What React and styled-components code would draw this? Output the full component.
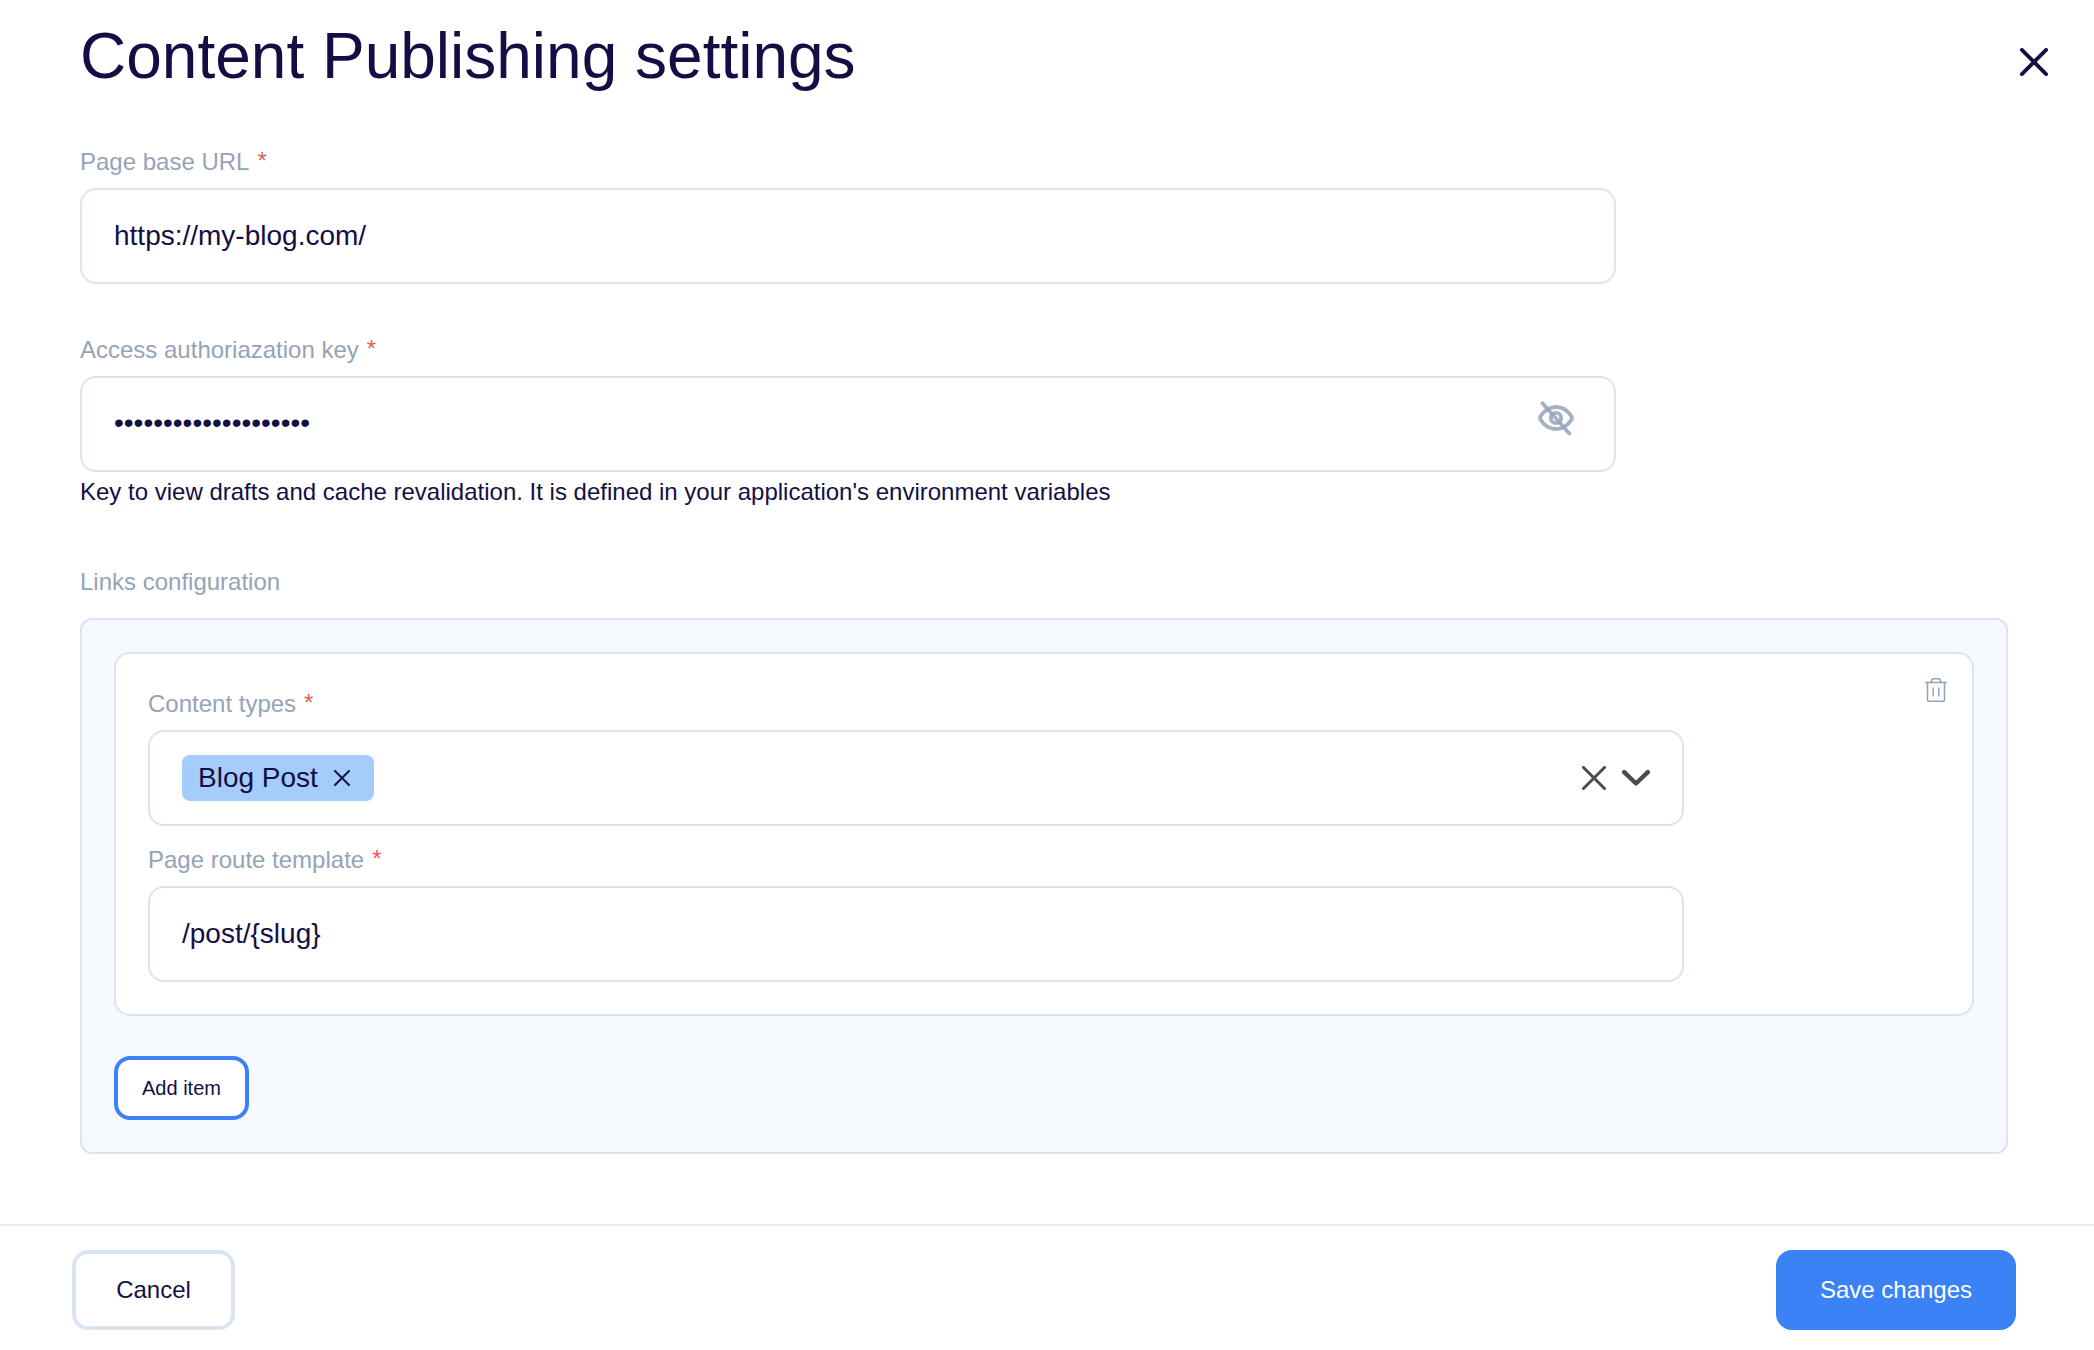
import React from 'react';
import styled, { createGlobalStyle } from 'styled-components';

const ink = '#130f45';
const muted = '#94a3b8';
const line = '#dbe4f3';
const blue = '#3b82f6';

const GlobalStyle = createGlobalStyle`
  *, *::before, *::after { box-sizing: border-box; }
  body {
    margin: 0;
    background: #fff;
    color: ${ink};
    font-family: "Liberation Sans", Arial, Helvetica, sans-serif;
  }
  button { font: inherit; color: inherit; cursor: pointer; }
`;

const Dialog = styled.div`
  width: 100%;
  height: 1350px;
  display: flex;
  flex-direction: column;
  background: #fff;
`;

const Header = styled.header`
  display: flex;
  justify-content: space-between;
  align-items: flex-start;
  height: 148px;
  padding: 20px 46px 0 80px;
`;

const Title = styled.h1`
  margin: 0;
  font-size: 64px;
  font-weight: 400;
  line-height: 73px;
`;

const IconButton = styled.button`
  display: flex;
  padding: 0;
  border: 0;
  background: none;
  color: ${(p) => p.$color || ink};
  margin-top: ${(p) => p.$top || 0}px;
`;

const Body = styled.main`
  flex: 1;
  display: flex;
  flex-direction: column;
  padding: 0 86px 0 80px;
`;

const Field = styled.div`
  display: flex;
  flex-direction: column;
  width: 1536px;
  margin-bottom: ${(p) => p.$gap || 0}px;
`;

const Label = styled.div`
  display: flex;
  gap: 8px;
  margin-bottom: ${(p) => p.$gap || 12}px;
  font-size: 24px;
  line-height: 28px;
  color: ${muted};
`;

const Required = styled.span`
  margin-top: -1px;
  color: #e2605a;
`;

const Box = styled.div`
  display: flex;
  align-items: center;
  justify-content: space-between;
  height: 96px;
  padding: 0 32px;
  border: 2px solid ${line};
  border-radius: 16px;
  background: #fff;
  font-size: 28px;
  line-height: 32px;
`;

const Secret = styled.span`
  margin-bottom: 2px;
`;

const EyeButton = styled(IconButton)`
  margin: 0 8px 12px 0;
`;

const Hint = styled.div`
  margin-top: 6px;
  font-size: 24px;
  line-height: 28px;
`;

const Panel = styled.section`
  display: flex;
  flex-direction: column;
  align-items: flex-start;
  gap: 40px;
  padding: 32px;
  border: 2px solid ${line};
  border-radius: 12px;
  background: #f6f9fe;
`;

const Card = styled.div`
  display: flex;
  justify-content: space-between;
  align-items: flex-start;
  width: 100%;
  padding: 36px 25px 32px 32px;
  border: 2px solid ${line};
  border-radius: 16px;
  background: #fff;
`;

const Tag = styled.span`
  display: flex;
  align-items: center;
  justify-content: space-between;
  width: 192px;
  height: 46px;
  padding: 0 24px 0 16px;
  border-radius: 8px;
  background: #a5cdfb;
`;

const Indicators = styled.div`
  display: flex;
  align-items: center;
  gap: 16px;
  color: #4b4b50;
`;

const Button = styled.button`
  display: flex;
  align-items: center;
  justify-content: center;
  padding: 0;
  width: ${(p) => p.$width}px;
  height: ${(p) => p.$height}px;
  border: 4px solid ${(p) => p.$border};
  border-radius: 16px;
  background: ${(p) => p.$fill || '#fff'};
  color: ${(p) => p.$text || ink};
  && { font-size: ${(p) => p.$size}px; }
`;

const Footer = styled.footer`
  display: flex;
  justify-content: space-between;
  align-items: flex-start;
  height: 126px;
  padding: 24px 78px 0 72px;
  border-top: 2px solid #ecedf4;
`;

const Cross = ({ size, stroke, cap = 'round' }) => {
  const a = stroke / 2;
  const b = size - a;
  return (
    <svg width={size} height={size} viewBox={`0 0 ${size} ${size}`} fill="none" stroke="currentColor" strokeWidth={stroke} strokeLinecap={cap}>
      <path d={`M${a} ${a}L${b} ${b}M${b} ${a}L${a} ${b}`} />
    </svg>
  );
};

const Chevron = () => (
  <svg width="28" height="16" viewBox="0 0 28 16" fill="none" stroke="currentColor" strokeWidth="4.400" strokeLinecap="round" strokeLinejoin="round">
    <path d="M2.200 2.200L14 13.500L25.800 2.200" />
  </svg>
);

const EyeOff = () => (
  <svg width="36" height="36" viewBox="0 0 36 36" fill="none" stroke="currentColor" strokeOpacity="0.85" strokeWidth="3.800" strokeLinecap="round" strokeLinejoin="round">
    <path d="M2.600 16.300C6.500 10.200 11.800 7 18 7S29.500 10.200 33.400 16.300Q34.400 18 33.400 19.700C29.500 25.800 24.200 29 18 29S6.500 25.800 2.600 19.700Q1.600 18 2.600 16.300Z" />
    <circle cx="18" cy="18" r="5.200" />
    <path d="M4.500 3.200L31.300 33.600" />
  </svg>
);

const Trash = () => (
  <svg width="22" height="24" viewBox="0 0 22 24" fill="none" stroke="currentColor" strokeWidth="1.500">
    <path d="M0 4.500H22M2.500 4.500V22.300Q2.500 23.250 3.500 23.250H18.500Q19.500 23.250 19.500 22.300V4.500M6.500 4.500V3Q6.500 0.750 8.800 0.750H13.200Q15.500 0.750 15.500 3V4.500M8.200 9.500V18.500M13.800 9.500V18.500" />
  </svg>
);

export default function App() {
  return (
    <>
      <GlobalStyle />
      <Dialog>
        <Header>
          <Title>Content Publishing settings</Title>
          <IconButton $top={28} aria-label="Close">
            <Cross size={28} stroke={3.8} />
          </IconButton>
        </Header>
        <Body>
          <Field $gap={52}>
            <Label>Page base URL <Required>*</Required></Label>
            <Box>https://my-blog.com/</Box>
          </Field>
          <Field $gap={62}>
            <Label>Access authoriazation key <Required>*</Required></Label>
            <Box>
              <Secret>{'•'.repeat(20)}</Secret>
              <EyeButton $color={muted} aria-label="Show key"><EyeOff /></EyeButton>
            </Box>
            <Hint>Key to view drafts and cache revalidation. It is defined in your application's environment variables</Hint>
          </Field>
          <Label $gap={22}>Links configuration</Label>
          <Panel>
            <Card>
              <div>
                <Field $gap={20}>
                  <Label>Content types <Required>*</Required></Label>
                  <Box>
                    <Tag>
                      Blog Post
                      <Cross size={16} stroke={2} />
                    </Tag>
                    <Indicators>
                      <Cross size={24} stroke={3} />
                      <Chevron />
                    </Indicators>
                  </Box>
                </Field>
                <Field>
                  <Label>Page route template <Required>*</Required></Label>
                  <Box>{'/post/{slug}'}</Box>
                </Field>
              </div>
              <IconButton $top={-12} $color={muted} aria-label="Delete item"><Trash /></IconButton>
            </Card>
            <Button $width={135} $height={64} $size={20} $border={blue}>Add item</Button>
          </Panel>
        </Body>
        <Footer>
          <Button $width={163} $height={80} $size={24} $border={line}>Cancel</Button>
          <Button $width={240} $height={80} $size={24} $border={blue} $fill={blue} $text="#fff">Save changes</Button>
        </Footer>
      </Dialog>
    </>
  );
}
